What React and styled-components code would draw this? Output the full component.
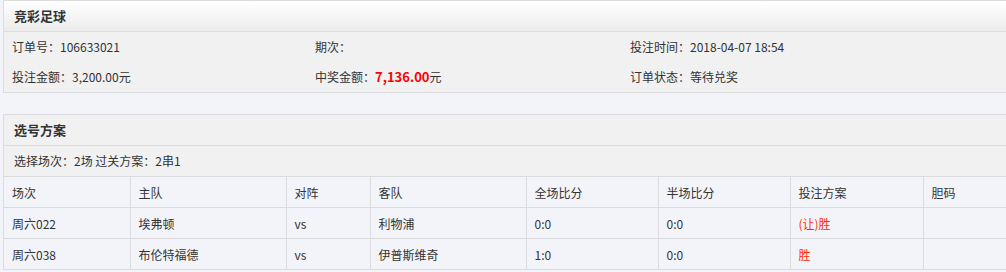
import React from 'react';
import styled, { createGlobalStyle } from 'styled-components';

const GlobalStyle = createGlobalStyle`
  html, body {
    margin: 0;
    padding: 0;
    background: #f3f4f9;
    overflow: hidden;
  }
  body {
    font-family: "Noto Sans CJK SC", "Noto Sans", sans-serif;
    font-size: 12px;
    color: #333;
  }
`;

const Page = styled.div`
  width: 1012px;
  padding: 0 0 0 3px;
`;

const Panel = styled.div`
  border: 1px solid #dcdcdf;
  background: #f1f1f1;
  margin-bottom: ${(p) => p.gap || 0}px;
`;

const PanelHead = styled.div`
  height: 30px;
  line-height: 30px;
  padding-left: 10px;
  font-size: 13px;
  font-weight: bold;
  color: #333;
  border-bottom: 1px solid #dcdce4;
  background: ${(p) => (p.plain ? '#f1f1f1' : 'linear-gradient(#ffffff, #ebebeb)')};
`;

const InfoGrid = styled.div`
  display: grid;
  grid-template-columns: 303px 315px 1fr;
  padding-left: 8px;
`;

const InfoItem = styled.div`
  height: 30px;
  line-height: 30px;
  white-space: nowrap;
`;

const Money = styled.span`
  color: #ff0000;
  font-weight: bold;
  font-size: 13px;
`;

const InfoLine = styled.div`
  height: 30px;
  line-height: 30px;
  padding-left: 10px;
  border-bottom: 1px solid #dcdcdf;
`;

const Table = styled.table`
  width: 100%;
  border-collapse: collapse;
  table-layout: fixed;
  background: #f3f4f9;
`;

const Cell = styled.td`
  height: 30px;
  padding: 0 0 0 8px;
  border-right: 1px solid #dcdcdf;
  border-bottom: 1px solid #dcdcdf;
  color: ${(p) => (p.red ? '#ff2a00' : '#333')};
  white-space: nowrap;
  &:last-child {
    border-right: none;
  }
  tr:last-child > & {
    border-bottom: none;
  }
`;

const widths = [126, 156, 84, 156, 132, 132, 133];
const heads = ['场次', '主队', '对阵', '客队', '全场比分', '半场比分', '投注方案', '胆码'];
const rows = [
  ['周六022', '埃弗顿', 'vs', '利物浦', '0:0', '0:0', '(让)胜', ''],
  ['周六038', '布伦特福德', 'vs', '伊普斯维奇', '1:0', '0:0', '胜', ''],
];

const App = () => {
  return (
    <Page>
      <GlobalStyle />
      <Panel gap={21}>
        <PanelHead>竞彩足球</PanelHead>
        <InfoGrid>
          <InfoItem>订单号：106633021</InfoItem>
          <InfoItem>期次：</InfoItem>
          <InfoItem>投注时间：2018-04-07 18:54</InfoItem>
          <InfoItem>投注金额：3,200.00元</InfoItem>
          <InfoItem>中奖金额：<Money>7,136.00</Money>元</InfoItem>
          <InfoItem>订单状态：等待兑奖</InfoItem>
        </InfoGrid>
      </Panel>
      <Panel>
        <PanelHead plain>选号方案</PanelHead>
        <InfoLine>选择场次：2场 过关方案：2串1</InfoLine>
        <Table>
          <colgroup>
            {widths.map((w, i) => (
              <col key={i} style={{ width: w }} />
            ))}
            <col />
          </colgroup>
          <tbody>
            <tr>
              {heads.map((h) => (
                <Cell key={h}>{h}</Cell>
              ))}
            </tr>
            {rows.map((r) => (
              <tr key={r[0]}>
                {r.map((c, i) => (
                  <Cell key={i} red={i === 6}>{c}</Cell>
                ))}
              </tr>
            ))}
          </tbody>
        </Table>
      </Panel>
    </Page>
  );
};

export default App;
